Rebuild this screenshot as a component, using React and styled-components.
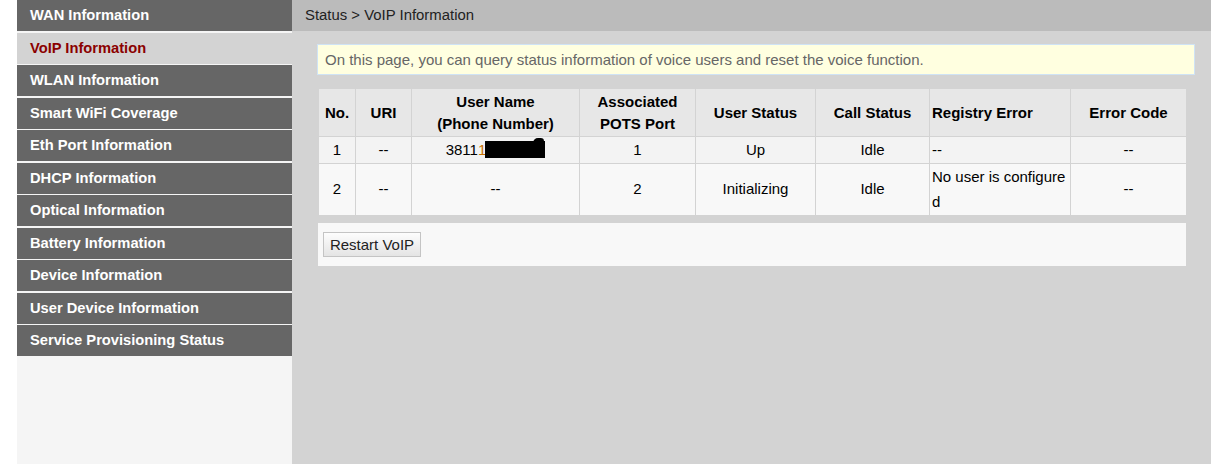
import styled, { createGlobalStyle } from "styled-components";

const GlobalStyle = createGlobalStyle`
  html, body {
    margin: 0;
    padding: 0;
    background: #ffffff;
    font-family: "Liberation Sans", Arial, sans-serif;
  }
`;

const menuItems = [
  "WAN Information",
  "VoIP Information",
  "WLAN Information",
  "Smart WiFi Coverage",
  "Eth Port Information",
  "DHCP Information",
  "Optical Information",
  "Battery Information",
  "Device Information",
  "User Device Information",
  "Service Provisioning Status",
];

const columns = [
  { title: ["No."], width: 37 },
  { title: ["URI"], width: 56 },
  { title: ["User Name", "(Phone Number)"], width: 168 },
  { title: ["Associated", "POTS Port"], width: 116 },
  { title: ["User Status"], width: 120 },
  { title: ["Call Status"], width: 114 },
  { title: ["Registry Error"], width: 141, left: true },
  { title: ["Error Code"], width: 116 },
];

const App = () => {
  return (
    <>
      <GlobalStyle />
      <Page>
        <Sidebar>
          {menuItems.map((item) => (
            <MenuItem key={item} $active={item === "VoIP Information"}>
              {item}
            </MenuItem>
          ))}
        </Sidebar>
        <Main>
          <Breadcrumb>Status &gt; VoIP Information</Breadcrumb>
          <Content>
            <InfoBox>
              On this page, you can query status information of voice users and
              reset the voice function.
            </InfoBox>
            <Table>
              <colgroup>
                {columns.map((col, i) => (
                  <col key={i} style={{ width: col.width }} />
                ))}
              </colgroup>
              <thead>
                <tr>
                  {columns.map((col, i) => (
                    <HeadCell key={i} $left={col.left}>
                      {col.title.map((line, j) => (
                        <div key={j}>{line}</div>
                      ))}
                    </HeadCell>
                  ))}
                </tr>
              </thead>
              <tbody>
                <Row $bg="#f3f3f3">
                  <Cell>1</Cell>
                  <Cell>--</Cell>
                  <Cell>
                    <Phone>
                      3811<Hint>1</Hint>
                      <Redacted />
                    </Phone>
                  </Cell>
                  <Cell>1</Cell>
                  <Cell>Up</Cell>
                  <Cell>Idle</Cell>
                  <Cell $left>--</Cell>
                  <Cell>--</Cell>
                </Row>
                <Row $bg="#f8f8f8">
                  <Cell>2</Cell>
                  <Cell>--</Cell>
                  <Cell>--</Cell>
                  <Cell>2</Cell>
                  <Cell>Initializing</Cell>
                  <Cell>Idle</Cell>
                  <Cell $left>No user is configured</Cell>
                  <Cell>--</Cell>
                </Row>
              </tbody>
            </Table>
            <ButtonPanel>
              <Button>Restart VoIP</Button>
            </ButtonPanel>
          </Content>
        </Main>
      </Page>
    </>
  );
};

export default App;

const Page = styled.div`
  display: flex;
  min-height: 464px;
  height: 100vh;
  padding: 0 10px 0 17px;
  box-sizing: border-box;
`;

const Sidebar = styled.nav`
  display: flex;
  flex-direction: column;
  gap: 1.5px;
  width: 275px;
  flex-shrink: 0;
  background-color: #f5f5f5;
`;

const MenuItem = styled.div`
  height: 31px;
  padding-left: 13px;
  line-height: 31px;
  font-size: 14.7px;
  font-weight: bold;
  color: ${({ $active }) => ($active ? "#8b0000" : "#ffffff")};
  background-color: ${({ $active }) => ($active ? "#d3d3d3" : "#666666")};
  white-space: nowrap;
`;

const Main = styled.main`
  display: flex;
  flex-direction: column;
  flex: 1 1 0;
  background-color: #d3d3d3;
`;

const Breadcrumb = styled.div`
  height: 31px;
  padding-left: 13px;
  line-height: 31px;
  font-size: 14.9px;
  color: #222222;
  background-color: #bbbbbb;
`;

const Content = styled.div`
  display: flex;
  flex-direction: column;
  padding: 13px 16px 0 25px;
`;

const InfoBox = styled.div`
  height: 29px;
  padding-left: 7px;
  line-height: 29px;
  font-size: 15px;
  color: #666666;
  background-color: #ffffe0;
  border: 1px solid #cfe3f5;
`;

const Table = styled.table`
  width: 868px;
  margin: 13px 0 0 1px;
  table-layout: fixed;
  border-collapse: collapse;
  font-size: 15px;
  color: #000000;
`;

const HeadCell = styled.th`
  padding: 2px 2px 1px;
  line-height: 22px;
  font-weight: bold;
  text-align: ${({ $left }) => ($left ? "left" : "center")};
  background-color: #e7e7e7;
  border: 1px solid #d3d3d3;
`;

const Row = styled.tr`
  background-color: ${({ $bg }) => $bg};
`;

const Cell = styled.td`
  padding: 0 2px;
  line-height: 25.5px;
  text-align: ${({ $left }) => ($left ? "left" : "center")};
  word-break: break-all;
  border: 1px solid #d3d3d3;
`;

const Phone = styled.span`
  display: inline-flex;
  align-items: center;
`;

const Hint = styled.span`
  color: #c87000;
`;

const Redacted = styled.span`
  position: relative;
  display: inline-block;
  width: 60px;
  height: 17px;
  margin-left: -1px;
  background-color: #000000;

  &::after {
    content: "";
    position: absolute;
    top: -3px;
    right: 1px;
    width: 11px;
    height: 5px;
    border-radius: 6px 4px 0 0;
    background-color: #000000;
  }
`;

const ButtonPanel = styled.div`
  display: flex;
  align-items: center;
  width: 868px;
  height: 43px;
  margin: 7px 0 0 1px;
  padding-left: 5px;
  box-sizing: border-box;
  background-color: #f8f8f8;
`;

const Button = styled.button`
  height: 25px;
  width: 98px;
  padding: 0;
  font-family: "Liberation Sans", Arial, sans-serif;
  font-size: 15px;
  color: #222222;
  background: linear-gradient(#fdfdfd, #e4e4e4);
  border: 1px solid #c4c4c4;
  border-radius: 0;
`;
